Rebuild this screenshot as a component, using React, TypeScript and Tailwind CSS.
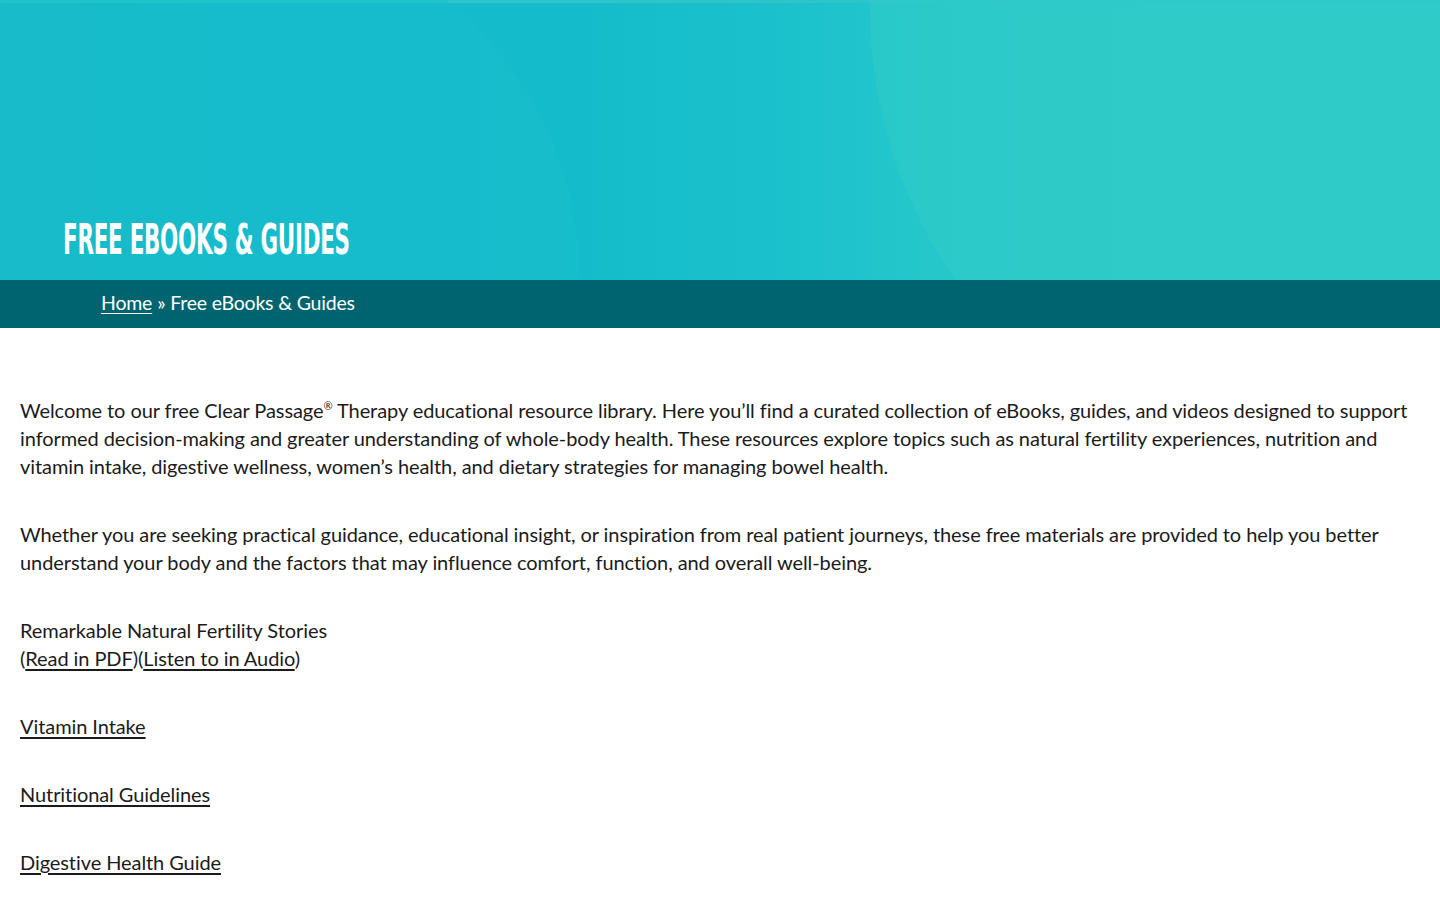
export default function App() {
  return (
    <div className="min-h-screen bg-white font-['Lato','Noto_Sans',sans-serif] text-[#1b1b1b]">
      {/* hero */}
      <div className="relative h-[280px] overflow-hidden bg-[linear-gradient(90deg,#16b9c9_0%,#14bccb_40%,#1bc2cc_55%,#25c7ca_65%,#2dcac8_80%,#2ecbc7_100%)]">
        <div className="absolute inset-x-0 top-0 h-[3px] bg-[#2cc6c8]" />
        <div className="absolute left-[-260px] top-[-80px] h-[720px] w-[840px] rounded-full bg-[#17bdcc] opacity-50" />
        <div className="absolute left-[870px] top-[-460px] h-[940px] w-[1200px] rounded-full bg-[#30ccc8] opacity-60" />
        <div className="relative flex h-full items-end px-[63px] pb-[19px]">
          <h1 className="origin-left scale-x-[0.555] whitespace-nowrap font-['DejaVu_Sans_Condensed','DejaVu_Sans',sans-serif] text-[43px] font-bold uppercase leading-none tracking-[-0.5px] text-white">
            Free eBooks &amp; Guides
          </h1>
        </div>
      </div>

      {/* breadcrumb */}
      <div className="flex h-[48px] items-center bg-[#00646e] px-[101px] pb-[2px] text-[19.5px] tracking-[-0.2px] text-white">
        <a href="#" className="underline underline-offset-[3px]">Home</a>
        <span className="ml-[5px]">» Free eBooks &amp; Guides</span>
      </div>

      {/* content */}
      <div className="px-5 pt-[68px] text-[20px] leading-[28px] tracking-[-0.08px]">
        <p className="mb-10">
          Welcome to our free Clear Passage<span className="align-top text-[11px] leading-[20px]">®</span> Therapy educational resource library. Here you’ll find a curated collection of eBooks, guides, and videos designed to support informed decision-making and greater understanding of whole-body health. These resources explore topics such as natural fertility experiences, nutrition and vitamin intake, digestive wellness, women’s health, and dietary strategies for managing bowel health.
        </p>
        <p className="mb-10">
          Whether you are seeking practical guidance, educational insight, or inspiration from real patient journeys, these free materials are provided to help you better understand your body and the factors that may influence comfort, function, and overall well-being.
        </p>
        <p className="mb-10">
          Remarkable Natural Fertility Stories
          <br />
          (<a href="#" className="underline underline-offset-[3px]">Read in PDF</a>)(<a href="#" className="underline underline-offset-[3px]">Listen to in Audio</a>)
        </p>
        <p className="mb-10">
          <a href="#" className="underline underline-offset-[3px]">Vitamin Intake</a>
        </p>
        <p className="mb-10">
          <a href="#" className="underline underline-offset-[3px]">Nutritional Guidelines</a>
        </p>
        <p className="mb-10">
          <a href="#" className="underline underline-offset-[3px]">Digestive Health Guide</a>
        </p>
      </div>
    </div>
  );
}
